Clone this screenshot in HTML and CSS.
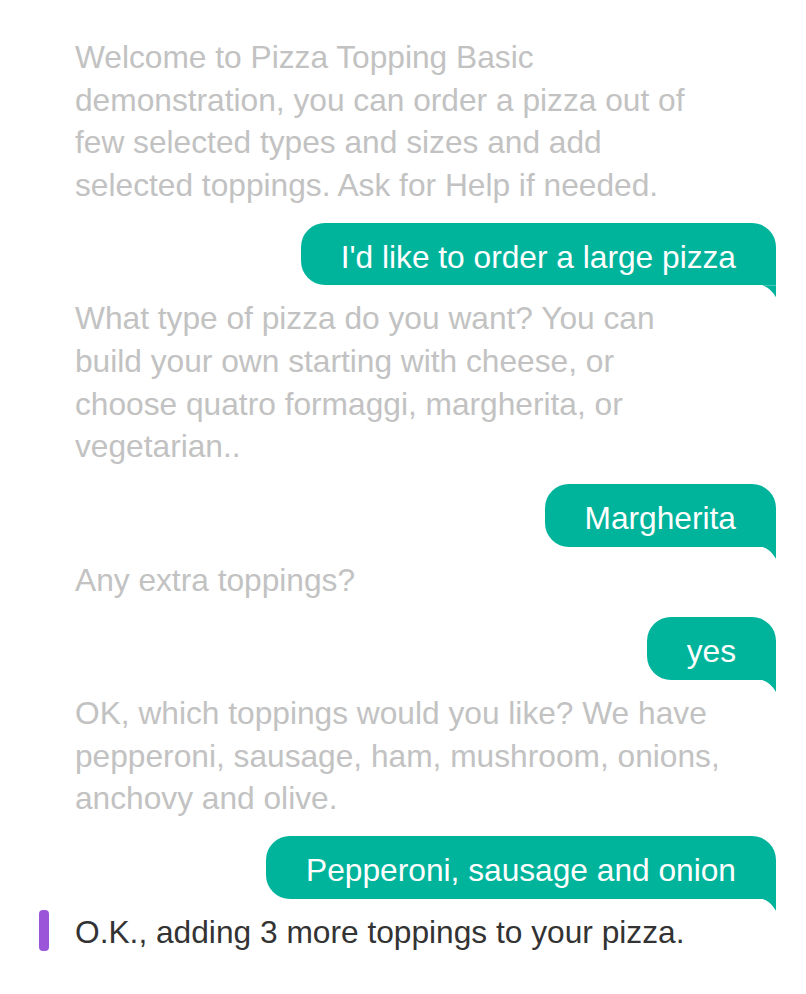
FILE: index.html
```html
<!DOCTYPE html>
<html lang="en">
<head>
<meta charset="utf-8">
<title>Pizza Topping Basic</title>
<link rel="stylesheet" href="styles.css">
</head>
<body>
<main class="chat">
  <p class="bot">Welcome to Pizza Topping Basic<br>demonstration, you can order a pizza out of<br>few selected types and sizes and add<br>selected toppings. Ask for Help if needed.</p>
  <div class="bubble">I'd like to order a large pizza</div>
  <p class="bot">What type of pizza do you want? You can<br>build your own starting with cheese, or<br>choose quatro formaggi, margherita, or<br>vegetarian..</p>
  <div class="bubble">Margherita</div>
  <p class="bot">Any extra toppings?</p>
  <div class="bubble">yes</div>
  <p class="bot">OK, which toppings would you like? We have<br>pepperoni, sausage, ham, mushroom, onions,<br>anchovy and olive.</p>
  <div class="bubble">Pepperoni, sausage and onion</div>
  <div class="current">
    <span class="marker"></span>
    <p class="bot active">O.K., adding 3 more toppings to your pizza.</p>
  </div>
</main>
</body>
</html>
```
FILE: styles.css
```css
html, body {
  margin: 0;
  padding: 0;
  background: #ffffff;
}

body {
  font-family: "Liberation Sans", Arial, Helvetica, sans-serif;
  font-size: 31.7px;
  line-height: 42.67px;
}

.chat {
  display: flex;
  flex-direction: column;
  padding: 36px 30px 0 75px;
}

.bot {
  margin: 0;
  color: #c2c2c2;
  white-space: nowrap;
}

.bubble {
  position: relative;
  align-self: flex-end;
  margin: 16px 0 12px;
  padding: 13px 40px 7px;
  background: #00b49c;
  color: #ffffff;
  border-radius: 24px 24px 0 24px;
  white-space: nowrap;
}

.bubble::after {
  content: "";
  position: absolute;
  right: 0;
  top: 100%;
  width: 14px;
  height: 12px;
  background: #00b49c;
  clip-path: path("M0 0 H14 V12 Q8 2 0 0 Z");
}

.current {
  display: flex;
  align-items: center;
  gap: 26px;
  margin-left: -36px;
}

.marker {
  width: 10px;
  height: 41px;
  border-radius: 4px;
  background: #9b55d9;
  margin-top: -4px;
}

.bot.active {
  color: #333333;
}
```
